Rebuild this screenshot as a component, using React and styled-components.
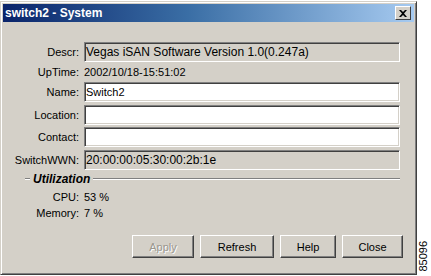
import React from "react";
import styled, { createGlobalStyle } from "styled-components";

const Global = createGlobalStyle`
  body {
    margin: 0;
    background: #ffffff;
    font-family: "Liberation Sans", Arial, sans-serif;
  }
`;

const Page = styled.div`
  display: flex;
  align-items: flex-start;
  width: 431px;
  height: 276px;
  padding-top: 1px;
  box-sizing: border-box;
`;

const Window = styled.div`
  width: 417px;
  height: 274px;
  box-sizing: border-box;
  background: #d4d0c8;
  border-top: 1px solid #d4d0c8;
  border-left: 1px solid #d4d0c8;
  border-right: 1px solid #404040;
  border-bottom: 1px solid #404040;
  box-shadow: inset 1px 1px 0 #ffffff, inset -1px -1px 0 #808080;
  padding: 2px;
  display: flex;
  flex-direction: column;
`;

const TitleBar = styled.div`
  height: 18px;
  display: flex;
  align-items: center;
  justify-content: space-between;
  padding: 0 3px 0 2px;
  background: linear-gradient(to right, #0a246a 0%, #3a6ea5 45%, #a6caf0 100%);
`;

const Title = styled.span`
  color: #ffffff;
  font-family: "Liberation Sans", Arial, sans-serif;
  font-weight: bold;
  font-size: 12px;
`;

const CloseBox = styled.div`
  width: 16px;
  height: 14px;
  box-sizing: border-box;
  background: #d4d0c8;
  border-top: 1px solid #ffffff;
  border-left: 1px solid #ffffff;
  border-right: 1px solid #404040;
  border-bottom: 1px solid #404040;
  display: flex;
  align-items: center;
  justify-content: center;
`;

const Body = styled.div`
  flex: 1;
  display: flex;
  flex-direction: column;
  padding: 20px 14px 0 0;
`;

const Form = styled.div`
  display: grid;
  grid-template-columns: 76px 316px;
  column-gap: 5px;
  row-gap: 2px;
  align-items: center;
`;

const Label = styled.span`
  text-align: right;
  font-size: 11px;
  color: #000;
  white-space: nowrap;
`;

const Field = styled.div`
  height: 20px;
  box-sizing: border-box;
  display: flex;
  align-items: center;
  padding: 0 1px;
  font-size: ${(p) => (p.$big ? "12px" : "11px")};
  color: #000;
  background: ${(p) => (p.$readOnly ? "#d4d0c8" : "#ffffff")};
  border-top: 1px solid #808080;
  border-left: 1px solid #808080;
  border-right: 1px solid #ffffff;
  border-bottom: 1px solid #ffffff;
  box-shadow: inset 1px 1px 0 #404040, inset -1px -1px 0 #d4d0c8;
  margin: ${(p) => (p.$gapTop ? "1px 0 0" : "0")};
`;

const Value = styled.span`
  font-size: 11px;
  height: 16px;
  display: flex;
  align-items: center;
`;

const Group = styled.div`
  margin: 2px 0 0 22px;
  display: flex;
  align-items: center;
  gap: 3px;
`;

const GroupLine = styled.div`
  height: 0;
  border-top: 1px solid #808080;
  border-bottom: 1px solid #ffffff;
  width: ${(p) => p.$w};
  flex: ${(p) => (p.$grow ? 1 : "none")};
`;

const GroupTitle = styled.span`
  font-family: "Liberation Sans", Arial, sans-serif;
  font-weight: bold;
  font-style: italic;
  font-size: 12px;
`;

const Stats = styled.div`
  display: grid;
  grid-template-columns: 76px auto;
  column-gap: 5px;
  row-gap: 0;
  margin-top: 3px;
  align-items: center;
`;

const Buttons = styled.div`
  display: flex;
  justify-content: flex-end;
  gap: 6px;
  margin-top: 14px;
  margin-right: -3px;
`;

const Button = styled.button`
  width: ${(p) => p.$w}px;
  height: 23px;
  box-sizing: border-box;
  background: #d4d0c8;
  font-family: "Liberation Sans", Arial, sans-serif;
  font-size: 11px;
  color: ${(p) => (p.disabled ? "#9a978f" : "#000")};
  text-shadow: ${(p) => (p.disabled ? "1px 1px 0 #ffffff" : "none")};
  border-top: 1px solid #ffffff;
  border-left: 1px solid #ffffff;
  border-right: 1px solid #404040;
  border-bottom: 1px solid #404040;
  box-shadow: inset -1px -1px 0 #808080;
  padding: 0;
`;

const Side = styled.div`
  flex: 1;
  height: 100%;
  display: flex;
  align-items: flex-end;
  justify-content: center;
  padding: 0 2px 4px 0;
  box-sizing: border-box;
`;

const Code = styled.span`
  writing-mode: vertical-rl;
  transform: rotate(180deg);
  font-size: 11px;
  color: #000;
`;

export default function App() {
  return (
    <>
      <Global />
      <Page>
        <Window>
          <TitleBar>
            <Title>switch2 - System</Title>
            <CloseBox>
              <svg width="8" height="7" viewBox="0 0 8 7">
                <path d="M0 0h2l2 2 2-2h2L5 3.5 8 7H6L4 5 2 7H0l3-3.5z" fill="#000" />
              </svg>
            </CloseBox>
          </TitleBar>
          <Body>
            <Form>
              <Label>Descr:</Label>
              <Field $readOnly $big>Vegas iSAN Software Version 1.0(0.247a)</Field>
              <Label>UpTime:</Label>
              <Value>2002/10/18-15:51:02</Value>
              <Label>Name:</Label>
              <Field>Switch2</Field>
              <Label>Location:</Label>
              <Field $gapTop />
              <Label>Contact:</Label>
              <Field />
              <Label>SwitchWWN:</Label>
              <Field $readOnly $big $gapTop>20:00:00:05:30:00:2b:1e</Field>
            </Form>
            <Group>
              <GroupLine $w="5px" />
              <GroupTitle>Utilization</GroupTitle>
              <GroupLine $grow />
            </Group>
            <Stats>
              <Label>CPU:</Label>
              <Value>53 %</Value>
              <Label>Memory:</Label>
              <Value>7 %</Value>
            </Stats>
            <Buttons>
              <Button $w={62} disabled>Apply</Button>
              <Button $w={74}>Refresh</Button>
              <Button $w={56}>Help</Button>
              <Button $w={61}>Close</Button>
            </Buttons>
          </Body>
        </Window>
        <Side>
          <Code>85096</Code>
        </Side>
      </Page>
    </>
  );
}
